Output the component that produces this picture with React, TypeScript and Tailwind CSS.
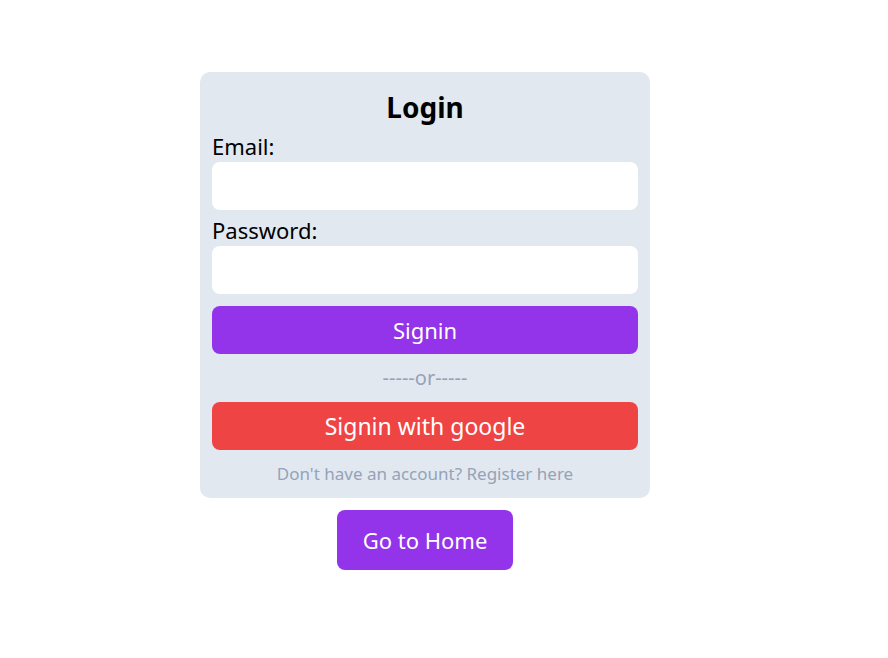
export default function App() {
  return (
    <div className="min-h-screen bg-white font-['Noto_Sans',sans-serif]">
      <div className="ml-[200px] flex w-[450px] flex-col items-center pt-[72px]">
        <div className="flex w-full flex-col rounded-[10px] bg-[#e2e8f0] px-3 pb-3 pt-3">
          <h1 className="text-center text-[28px] font-bold leading-[46px] text-black">Login</h1>
          <label className="text-[22px] leading-8 text-black">Email:</label>
          <input type="email" className="h-12 w-full rounded-lg bg-white px-3 outline-none" />
          <label className="mt-1 text-[22px] leading-8 text-black">Password:</label>
          <input type="password" className="h-12 w-full rounded-lg bg-white px-3 outline-none" />
          <button className="mt-3 h-12 w-full rounded-lg bg-[#9333ea] text-[22px] text-white">Signin</button>
          <p className="my-3 text-center text-[20px] leading-6 text-[#94a3b8]">-----or-----</p>
          <button className="h-12 w-full rounded-lg bg-[#ef4444] text-[23px] text-white">Signin with google</button>
          <p className="mt-3 text-center text-[17px] leading-6 text-[#94a3b8]">Don't have an account? Register here</p>
        </div>
        <button className="mt-3 h-[60px] rounded-lg bg-[#9333ea] px-[26px] text-[22px] text-white">Go to Home</button>
      </div>
    </div>
  );
}
